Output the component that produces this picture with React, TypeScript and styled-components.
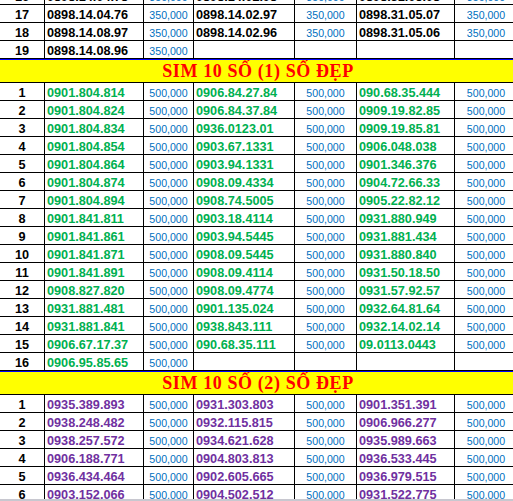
import React from "react";
import styled, { createGlobalStyle } from "styled-components";

const GlobalStyle = createGlobalStyle`
  html, body {
    margin: 0;
    padding: 0;
    background: #ffffff;
    overflow: hidden;
  }
`;

type Tone = "black" | "green" | "purple";

const toneColor: Record<Tone, string> = {
  black: "#000000",
  green: "#00b050",
  purple: "#7030a0",
};

const Sheet = styled.div`
  display: flex;
  flex-direction: column;
  width: 518px;
  margin-top: -13px;
`;

const Row = styled.div`
  display: grid;
  grid-template-columns: 45px 99px 50px 101px 62px 98px 63px;
  height: 18px;
`;

const Cell = styled.div`
  box-sizing: border-box;
  border-right: 1px solid #000;
  border-bottom: 1px solid #000;
  display: flex;
  align-items: flex-end;
  line-height: 14px;
  white-space: nowrap;
  overflow: hidden;
`;

const IndexCell = styled(Cell)`
  justify-content: center;
  font-family: "Liberation Sans", Arial, sans-serif;
  font-weight: 700;
  font-size: 12.7px;
  color: #000;
`;

const NumberCell = styled(Cell)<{ $tone: Tone }>`
  padding-left: 2px;
  font-family: "Liberation Sans", Arial, sans-serif;
  font-weight: 700;
  font-size: 12.7px;
  color: ${(p) => toneColor[p.$tone]};
`;

const PriceCell = styled(Cell)`
  justify-content: center;
  font-family: "Liberation Sans", Arial, sans-serif;
  font-size: 10.6px;
  color: #0070c0;
`;

const Band = styled.div`
  box-sizing: border-box;
  height: 24px;
  border-top: 1px solid #0000ff;
  border-bottom: 1px solid #000;
  background: #ffff00;
  display: flex;
  justify-content: center;
  padding-right: 2px;
`;

const BandTitle = styled.span`
  font-family: "Liberation Serif", "Times New Roman", serif;
  font-weight: 700;
  font-size: 18px;
  letter-spacing: 0.6px;
  line-height: 22px;
  color: #ff0000;
`;

const ScrollEdge = styled.div`
  position: fixed;
  left: 0;
  right: 0;
  top: 499px;
  height: 2px;
  background: #c8c8d0;
  pointer-events: none;
`;

type Entry = [string, string] | null;
type RowData = { n: number; items: Entry[] };

const topRows: RowData[] = [
  { n: 16, items: [["0898.14.04.78", "350,000"], ["0898.14.02.98", "350,000"], ["0898.31.05.08", "350,000"]] },
  { n: 17, items: [["0898.14.04.76", "350,000"], ["0898.14.02.97", "350,000"], ["0898.31.05.07", "350,000"]] },
  { n: 18, items: [["0898.14.08.97", "350,000"], ["0898.14.02.96", "350,000"], ["0898.31.05.06", "350,000"]] },
  { n: 19, items: [["0898.14.08.96", "350,000"], null, null] },
];

const p = "500,000";
const mk = (n: number, a: string, b?: string, c?: string): RowData => ({
  n,
  items: [[a, p], b ? [b, p] : null, c ? [c, p] : null],
});

const greenRows: RowData[] = [
  mk(1, "0901.804.814", "0906.84.27.84", "090.68.35.444"),
  mk(2, "0901.804.824", "0906.84.37.84", "0909.19.82.85"),
  mk(3, "0901.804.834", "0936.0123.01", "0909.19.85.81"),
  mk(4, "0901.804.854", "0903.67.1331", "0906.048.038"),
  mk(5, "0901.804.864", "0903.94.1331", "0901.346.376"),
  mk(6, "0901.804.874", "0908.09.4334", "0904.72.66.33"),
  mk(7, "0901.804.894", "0908.74.5005", "0905.22.82.12"),
  mk(8, "0901.841.811", "0903.18.4114", "0931.880.949"),
  mk(9, "0901.841.861", "0903.94.5445", "0931.881.434"),
  mk(10, "0901.841.871", "0908.09.5445", "0931.880.840"),
  mk(11, "0901.841.891", "0908.09.4114", "0931.50.18.50"),
  mk(12, "0908.827.820", "0908.09.4774", "0931.57.92.57"),
  mk(13, "0931.881.481", "0901.135.024", "0932.64.81.64"),
  mk(14, "0931.881.841", "0938.843.111", "0932.14.02.14"),
  mk(15, "0906.67.17.37", "090.68.35.111", "09.0113.0443"),
  mk(16, "0906.95.85.65"),
];

const purpleRows: RowData[] = [
  mk(1, "0935.389.893", "0931.303.803", "0901.351.391"),
  mk(2, "0938.248.482", "0932.115.815", "0906.966.277"),
  mk(3, "0938.257.572", "0934.621.628", "0935.989.663"),
  mk(4, "0906.188.771", "0904.803.813", "0936.533.445"),
  mk(5, "0936.434.464", "0902.605.665", "0936.979.515"),
  mk(6, "0903.152.066", "0904.502.512", "0931.522.775"),
];

const SheetRow = ({ row, tone }: { row: RowData; tone: Tone }) => (
  <Row>
    <IndexCell>{row.n}</IndexCell>
    {row.items.map((it, i) => (
      <React.Fragment key={i}>
        <NumberCell $tone={tone}>{it ? it[0] : ""}</NumberCell>
        <PriceCell>{it ? it[1] : ""}</PriceCell>
      </React.Fragment>
    ))}
  </Row>
);

export default function App() {
  return (
    <>
      <GlobalStyle />
      <Sheet>
        {topRows.map((r) => (
          <SheetRow key={`t${r.n}`} row={r} tone="black" />
        ))}
        <Band>
          <BandTitle>SIM 10 SỐ (1) SỐ ĐẸP</BandTitle>
        </Band>
        {greenRows.map((r) => (
          <SheetRow key={`g${r.n}`} row={r} tone="green" />
        ))}
        <Band>
          <BandTitle>SIM 10 SỐ (2) SỐ ĐẸP</BandTitle>
        </Band>
        {purpleRows.map((r) => (
          <SheetRow key={`p${r.n}`} row={r} tone="purple" />
        ))}
      </Sheet>
      <ScrollEdge />
    </>
  );
}
